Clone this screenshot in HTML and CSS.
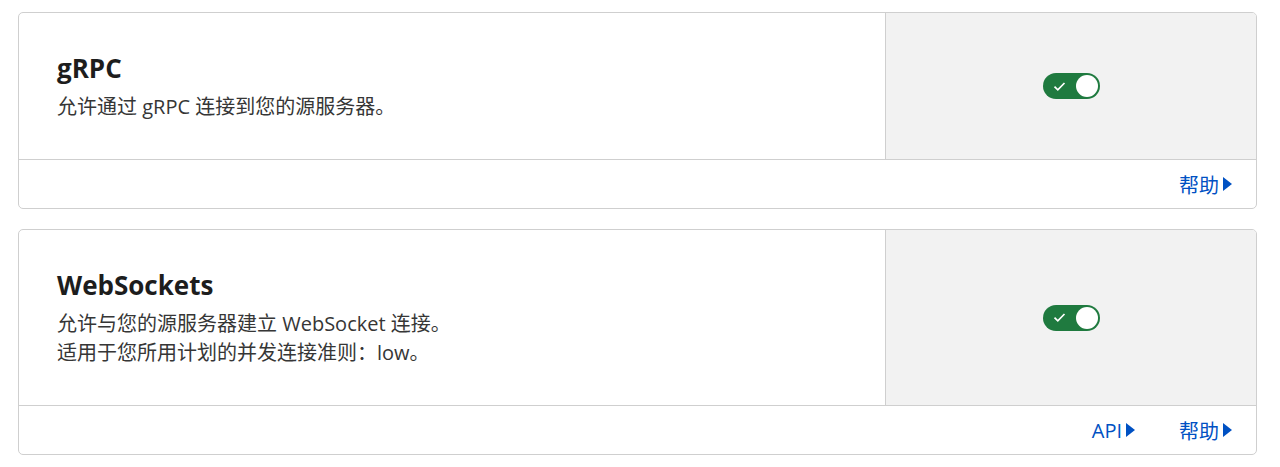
FILE: index.html
```html
<!DOCTYPE html>
<html lang="zh-CN">
<head>
  <meta charset="UTF-8">
  <meta name="viewport" content="width=device-width, initial-scale=1.0">
  <title>网络设置</title>
  <link rel="stylesheet" href="styles.css">
</head>

<body>
  <section class="card">
    <div class="card-main">
      <div class="card-body">
        <h3 class="card-title">gRPC</h3>
        <p class="card-text">允许通过 gRPC 连接到您的源服务器。</p>
      </div>
      <div class="card-side">
        <button class="toggle" type="button" aria-pressed="true" aria-label="gRPC">
          <svg class="toggle-check" width="13" height="11" viewBox="0 0 13 11">
            <path d="M1.5 5.6 L4.8 8.8 L11.5 2" fill="none" stroke="#fff" stroke-width="1.7"/>
          </svg>
          <span class="toggle-knob"></span>
        </button>
      </div>
    </div>
    <div class="card-footer">
      <a class="link" href="#">帮助<span class="arrow"></span></a>
    </div>
  </section>

  <section class="card">
    <div class="card-main">
      <div class="card-body">
        <h3 class="card-title">WebSockets</h3>
        <p class="card-text">允许与您的源服务器建立 WebSocket 连接。<br>适用于您所用计划的并发连接准则：low。</p>
      </div>
      <div class="card-side">
        <button class="toggle" type="button" aria-pressed="true" aria-label="WebSockets">
          <svg class="toggle-check" width="13" height="11" viewBox="0 0 13 11">
            <path d="M1.5 5.6 L4.8 8.8 L11.5 2" fill="none" stroke="#fff" stroke-width="1.7"/>
          </svg>
          <span class="toggle-knob"></span>
        </button>
      </div>
    </div>
    <div class="card-footer">
      <a class="link" href="#">API<span class="arrow"></span></a>
      <a class="link" href="#">帮助<span class="arrow"></span></a>
    </div>
  </section>
</body>
</html>
```

FILE: styles.css
```css
body {
  margin: 0;
  padding: 12px 23px 0 18px;
  background-color: #fff;
  font-family: "Open Sans", "Noto Sans CJK SC", sans-serif;
  color: #313131;
}
.card {
  border: 1px solid #cfcfcf;
  border-radius: 5px;
  margin-bottom: 20px;
  overflow: hidden;
}
.card-main {
  display: flex;
  border-bottom: 1px solid #cfcfcf;
}
.card-body {
  flex: 1;
  padding: 39px 38px 38px;
}
.card-title {
  margin: 0 0 8px;
  font-size: 26px;
  line-height: 32px;
  font-weight: 700;
  color: #1d1d1d;
}
.card-text {
  margin: 0;
  font-size: 20px;
  line-height: 29px;
  color: #363636;
}
.card-side {
  width: 370px;
  background-color: #f2f2f2;
  border-left: 1px solid #cfcfcf;
  display: flex;
  justify-content: center;
  align-items: center;
}
.toggle {
  width: 57px;
  height: 26px;
  padding: 0 2px 0 10px;
  border: none;
  border-radius: 13px;
  background-color: #1f7a3f;
  display: flex;
  align-items: center;
  justify-content: space-between;
  cursor: pointer;
}
.toggle-knob {
  width: 22px;
  height: 22px;
  border-radius: 50%;
  background-color: #fff;
}
.card-footer {
  height: 48px;
  padding: 0 24px;
  display: flex;
  justify-content: flex-end;
  align-items: center;
  gap: 44px;
}
.link {
  display: flex;
  align-items: center;
  gap: 4px;
  font-size: 20px;
  color: #0051c3;
  text-decoration: none;
}
.arrow {
  width: 0;
  height: 0;
  border-top: 7px solid transparent;
  border-bottom: 7px solid transparent;
  border-left: 9px solid #0051c3;
}
```
